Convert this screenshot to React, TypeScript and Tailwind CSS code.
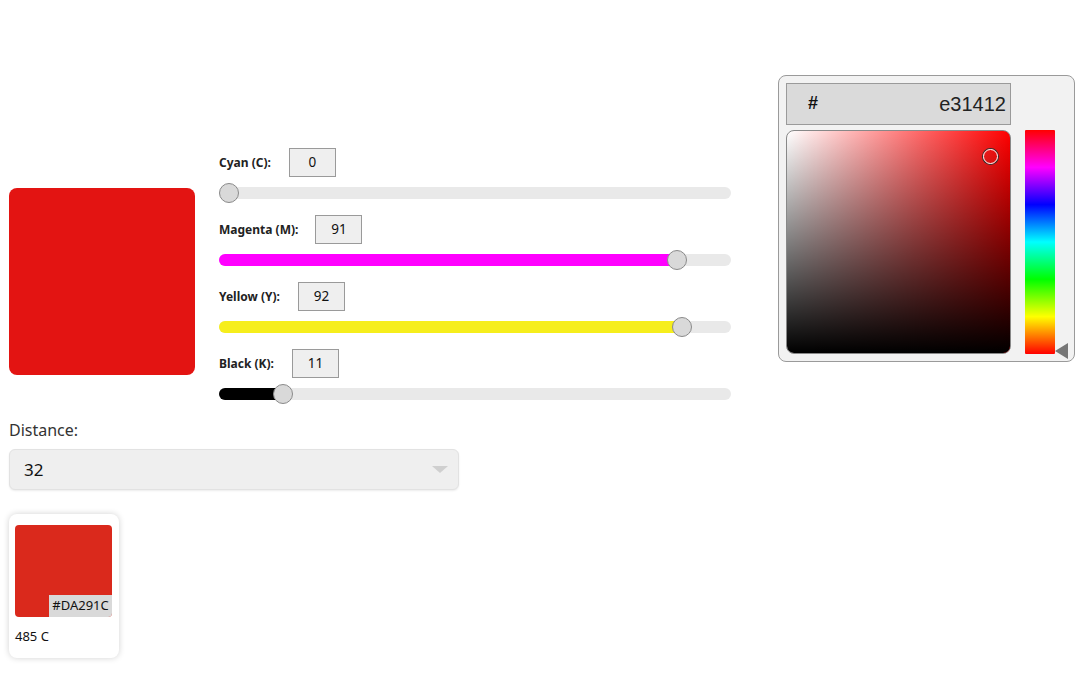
import React from "react";

const FONT = { fontFamily: '"Noto Sans", "Open Sans", sans-serif' };

function SliderRow({
  label,
  value,
  color,
  gap,
  last,
}: {
  label: string;
  value: number;
  color: string;
  gap: string;
  last?: boolean;
}) {
  const center = 10 + (value / 100) * 492;
  return (
    <div className={last ? "" : "mb-[16px]"}>
      <div className={`flex items-center ${gap}`}>
        <span className="text-[12px] font-bold text-[#222] leading-none">{label}</span>
        <div className="w-[47px] h-[29px] bg-[#efefef] border border-[#9a9a9a] flex items-center justify-center text-[13.5px] text-[#111]">
          {value}
        </div>
      </div>
      <div className="relative mt-[10px] h-[12px] w-[512px] rounded-full bg-[#e9e9e9]">
        <div
          className="absolute left-0 top-0 h-full rounded-full"
          style={{ width: center, background: color }}
        />
        <div
          className="absolute top-1/2 w-[20px] h-[20px] -mt-[10px] rounded-full bg-[#d9d9d9] border border-[#8a8a8a]"
          style={{ left: center - 10 }}
        />
      </div>
    </div>
  );
}

export default function App() {
  return (
    <div className="w-[1080px] h-[675px] bg-white overflow-hidden pl-[9px] pt-[75px]" style={FONT}>
      <div className="flex items-start">
        <div className="mt-[73px] flex items-center gap-[24px] shrink-0">
          <div className="w-[186px] h-[187px] rounded-[8px] bg-[#e31412] mt-[14px] shrink-0" />
          <div className="w-[512px] shrink-0">
            <SliderRow label="Cyan (C):" value={0} color="transparent" gap="gap-[18px]" />
            <SliderRow label="Magenta (M):" value={91} color="#ff00ff" gap="gap-[17px]" />
            <SliderRow label="Yellow (Y):" value={92} color="#f6ee1c" gap="gap-[18px]" />
            <SliderRow label="Black (K):" value={11} color="#000000" gap="gap-[18px]" last />
          </div>
        </div>
        <div className="ml-[47px] shrink-0 w-[297px] h-[287px] rounded-[8px] border border-[#9a9a9a] bg-[#f2f2f2] p-[7px] flex gap-[14px]">
          <div className="w-[225px] flex flex-col gap-[5px]">
            <div
              className="h-[42px] bg-[#dadada] border border-[#9a9a9a] flex items-center justify-between pl-[21px] pr-[4px]"
              style={{ fontFamily: '"Liberation Sans", Arial, sans-serif' }}
            >
              <span className="text-[18px] font-bold text-[#111]">#</span>
              <span className="text-[20px] text-[#222]">e31412</span>
            </div>
            <div className="relative h-[225px] rounded-[8px] overflow-hidden border border-[#888] bg-[linear-gradient(to_right,#ffffff,#ff0000)]">
              <div className="absolute inset-0 bg-[linear-gradient(to_top,#000000,rgba(0,0,0,0))]" />
              <div className="absolute left-[196px] top-[18px] w-[15px] h-[15px] rounded-full border-[1.5px] border-white ring-1 ring-[#333]" />
            </div>
          </div>
          <div className="relative mt-[47px] w-[30px] h-[224px]">
            <div className="w-full h-full rounded-[1px] bg-[linear-gradient(to_bottom,#ff0000_0%,#ff00ff_16.67%,#0000ff_33.33%,#00ffff_50%,#00ff00_66.67%,#ffff00_83.33%,#ff0000_100%)]" />
            <svg className="absolute left-[30px] bottom-[-5px]" width="14" height="16" viewBox="0 0 14 16">
              <polygon points="13,0 13,16 0,8" fill="#777" />
            </svg>
          </div>
        </div>
      </div>

      <div className="mt-[18px] text-[16px] text-[#333] leading-[24px]">Distance:</div>
      <div className="mt-[7px] w-[450px] h-[41px] rounded-[6px] bg-[#efefef] border border-[#e2e2e2] shadow-[0_1px_2px_rgba(0,0,0,0.08)] flex items-center justify-between pl-[14px] pr-[10px]">
        <span className="text-[17px] text-[#111]">32</span>
        <svg width="16" height="8" viewBox="0 0 16 8">
          <polygon points="0,0 16,0 8,7" fill="#cfcfcf" />
        </svg>
      </div>

      <div className="mt-[24px] w-[110px] h-[144px] rounded-[8px] bg-white shadow-[0_0_6px_rgba(0,0,0,0.18)] p-[6px] pt-[11px]">
        <div className="relative w-[97px] h-[92px] rounded-[4px] bg-[#da291c] overflow-hidden">
          <div className="absolute right-0 bottom-0 w-[63px] h-[22px] bg-[#d9d9d9] flex items-center justify-center text-[13px] text-[#111]">
            #DA291C
          </div>
        </div>
        <div className="mt-[10px] text-[13px] text-[#111]">485 C</div>
      </div>
    </div>
  );
}
